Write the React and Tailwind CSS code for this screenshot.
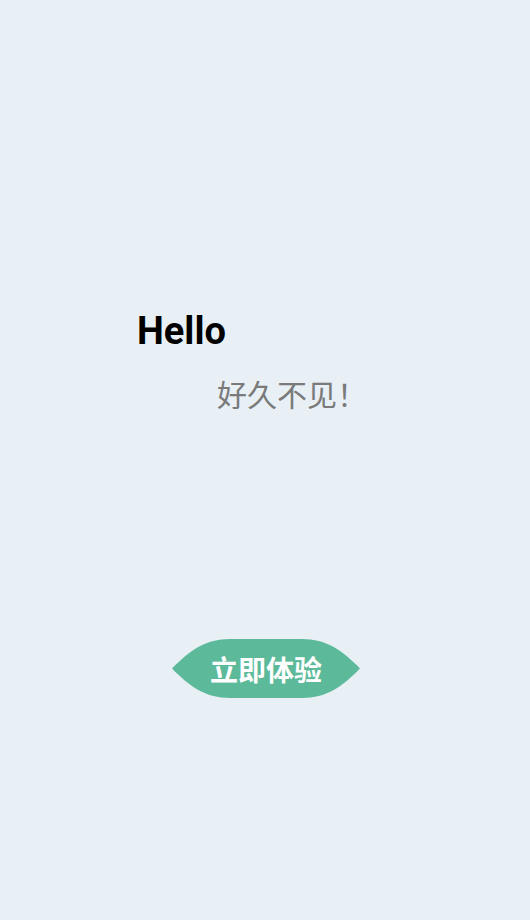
import React from "react";

const LeafButton = ({ children }) => (
  <button className="relative mx-auto flex h-[59px] w-[188px] items-center justify-center">
    {/* leaf-shaped background */}
    <svg
      className="absolute inset-0"
      width="188"
      height="59"
      viewBox="0 0 188 59"
      aria-hidden="true"
    >
      <path
        d="M0 29.5 C 18 11, 34 0, 58 0 L 130 0 C 154 0, 170 11, 188 29.5 C 170 48, 154 59, 130 59 L 58 59 C 34 59, 18 48, 0 29.5 Z"
        fill="#5cba9b"
      />
    </svg>
    <span className="relative text-[28px] leading-none font-bold text-white [font-family:'Noto_Sans_CJK_SC',sans-serif]">
      {children}
    </span>
  </button>
);

export default function App() {
  return (
    <div className="flex h-[920px] w-full flex-col bg-[#e8f0f6]">
      <div className="mt-[312px] pl-[137px]">
        <h1 className="text-[38px] leading-[38px] font-bold text-black [font-family:Roboto,sans-serif]">
          Hello
        </h1>
      </div>
      <div className="mt-[28px] pl-[217px]">
        <p className="text-[30px] leading-[30px] text-[#7a7a7a] [font-family:'Noto_Sans_CJK_SC',sans-serif]">
          好久不见！
        </p>
      </div>
      <div className="mt-[231px] flex">
        <div className="ml-[172px]">
          <LeafButton>立即体验</LeafButton>
        </div>
      </div>
    </div>
  );
}
